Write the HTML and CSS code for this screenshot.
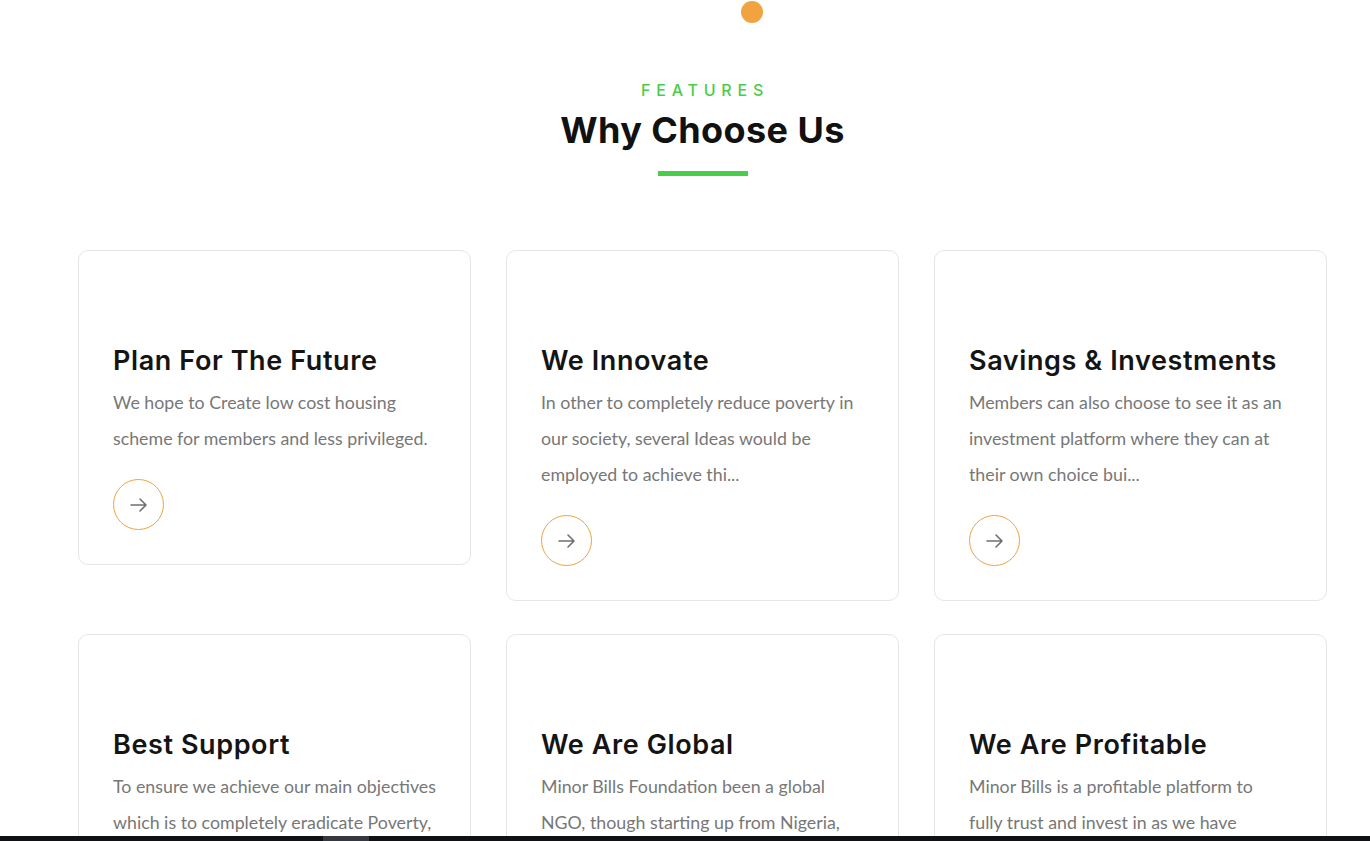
FILE: index.html
```html
<!DOCTYPE html>
<html lang="en">
<head>
<meta charset="utf-8">
<title>Why Choose Us</title>
<link rel="stylesheet" href="styles.css">
</head>
<body>
<span class="dot"></span>
<section class="features">
  <header class="section-head">
    <p class="eyebrow">FEATURES</p>
    <h2 class="section-title">Why Choose Us</h2>
    <span class="underline"></span>
  </header>
  <div class="grid">
    <article class="card">
      <div class="card-icon"></div>
      <h3 class="card-title">Plan For The Future</h3>
      <p class="card-text">We hope to Create low cost housing<br>scheme for members and less privileged.</p>
      <a class="more" href="#"><svg width="20" height="20" viewBox="0 0 20 20"><path d="M2 10h15M11 4l6 6-6 6" fill="none" stroke="#6f6f6f" stroke-width="1.6" stroke-linecap="round" stroke-linejoin="round"/></svg></a>
    </article>
    <article class="card">
      <div class="card-icon"></div>
      <h3 class="card-title">We Innovate</h3>
      <p class="card-text">In other to completely reduce poverty in<br>our society, several Ideas would be<br>employed to achieve thi...</p>
      <a class="more" href="#"><svg width="20" height="20" viewBox="0 0 20 20"><path d="M2 10h15M11 4l6 6-6 6" fill="none" stroke="#6f6f6f" stroke-width="1.6" stroke-linecap="round" stroke-linejoin="round"/></svg></a>
    </article>
    <article class="card">
      <div class="card-icon"></div>
      <h3 class="card-title">Savings &amp; Investments</h3>
      <p class="card-text">Members can also choose to see it as an<br>investment platform where they can at<br>their own choice bui...</p>
      <a class="more" href="#"><svg width="20" height="20" viewBox="0 0 20 20"><path d="M2 10h15M11 4l6 6-6 6" fill="none" stroke="#6f6f6f" stroke-width="1.6" stroke-linecap="round" stroke-linejoin="round"/></svg></a>
    </article>
    <article class="card">
      <div class="card-icon"></div>
      <h3 class="card-title">Best Support</h3>
      <p class="card-text">To ensure we achieve our main objectives<br>which is to completely eradicate Poverty,<br>we offer support...</p>
      <a class="more" href="#"><svg width="20" height="20" viewBox="0 0 20 20"><path d="M2 10h15M11 4l6 6-6 6" fill="none" stroke="#6f6f6f" stroke-width="1.6" stroke-linecap="round" stroke-linejoin="round"/></svg></a>
    </article>
    <article class="card">
      <div class="card-icon"></div>
      <h3 class="card-title">We Are Global</h3>
      <p class="card-text">Minor Bills Foundation been a global<br>NGO, though starting up from Nigeria,<br>we reach out...</p>
      <a class="more" href="#"><svg width="20" height="20" viewBox="0 0 20 20"><path d="M2 10h15M11 4l6 6-6 6" fill="none" stroke="#6f6f6f" stroke-width="1.6" stroke-linecap="round" stroke-linejoin="round"/></svg></a>
    </article>
    <article class="card">
      <div class="card-icon"></div>
      <h3 class="card-title">We Are Profitable</h3>
      <p class="card-text">Minor Bills is a profitable platform to<br>fully trust and invest in as we have<br>grown...</p>
      <a class="more" href="#"><svg width="20" height="20" viewBox="0 0 20 20"><path d="M2 10h15M11 4l6 6-6 6" fill="none" stroke="#6f6f6f" stroke-width="1.6" stroke-linecap="round" stroke-linejoin="round"/></svg></a>
    </article>
  </div>
</section>
<div class="bottom-bar"><span class="thumb"></span></div>
</body>
</html>
```
FILE: styles.css
```css
* { box-sizing: border-box; }
html, body { margin: 0; padding: 0; background: #fff; }
body {
  font-family: Lato, "Open Sans", sans-serif;
  color: #111;
  overflow: hidden;
  height: 841px;
}
.dot {
  position: absolute;
  left: 741px;
  top: 1px;
  width: 22px;
  height: 22px;
  border-radius: 50%;
  background: #f0a33e;
}
.features {
  width: 1249px;
  margin-left: 78px;
  padding-top: 80px;
}
.section-head {
  display: flex;
  flex-direction: column;
  align-items: center;
}
.eyebrow {
  margin: 0;
  font-family: Inter, "Open Sans", sans-serif;
  font-size: 16px;
  line-height: 20px;
  font-weight: 500;
  letter-spacing: 5.8px;
  color: #48cd4b;
  padding-left: 5px;
}
.section-title {
  margin: 8px 0 0;
  font-family: Inter, "Open Sans", sans-serif;
  font-size: 36px;
  line-height: 44px;
  font-weight: 700;
  letter-spacing: 0.4px;
  color: #111;
}
.underline {
  display: block;
  width: 90px;
  height: 5px;
  margin-top: 19px;
  background: #48cd4b;
}
.grid {
  margin-top: 74px;
  display: grid;
  grid-template-columns: repeat(3, 1fr);
  column-gap: 35px;
  row-gap: 33px;
  align-items: start;
}
.card {
  border: 1px solid #e6e6e6;
  border-radius: 10px;
  padding: 35px 20px 34px 34px;
  display: flex;
  flex-direction: column;
  align-items: flex-start;
}
.card-icon {
  height: 58px;
}
.card-title {
  margin: 0;
  font-family: Inter, "Open Sans", sans-serif;
  font-size: 27px;
  line-height: 34px;
  font-weight: 600;
  letter-spacing: 0.6px;
  color: #141414;
  white-space: nowrap;
}
.card-text {
  margin: 6px 0 0;
  font-size: 17.8px;
  line-height: 36px;
  color: #777;
  white-space: nowrap;
}
.more {
  margin-top: 23px;
  width: 51px;
  height: 51px;
  border: 1px solid #f0a33e;
  border-radius: 50%;
  display: flex;
  align-items: center;
  justify-content: center;
}
.bottom-bar {
  position: fixed;
  left: 0;
  right: 0;
  bottom: 0;
  height: 5px;
  background: #0f1114;
}
.thumb {
  position: absolute;
  left: 323px;
  top: 0;
  width: 46px;
  height: 5px;
  background: #35383c;
}
```
